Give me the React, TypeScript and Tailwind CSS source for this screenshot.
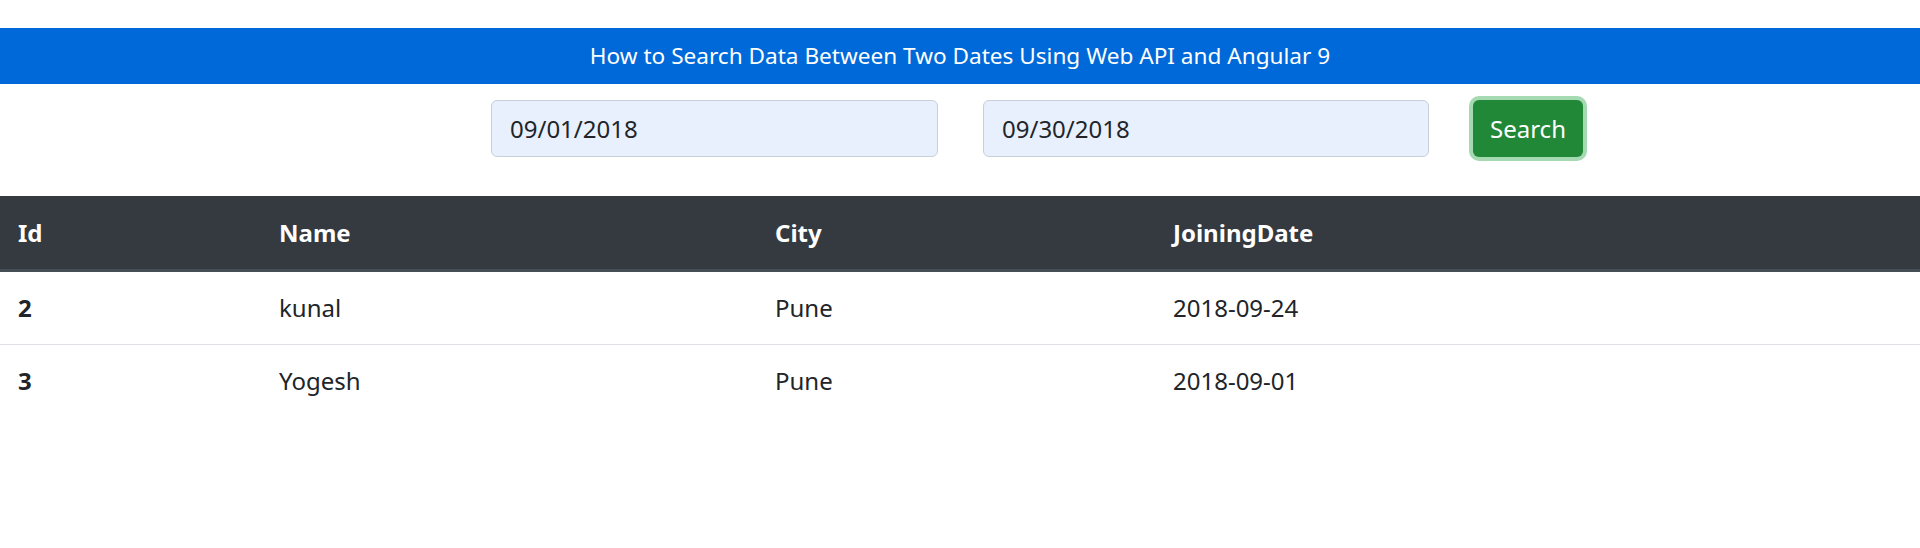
const rows = [
  { id: 2, name: 'kunal', city: 'Pune', joiningDate: '2018-09-24' },
  { id: 3, name: 'Yogesh', city: 'Pune', joiningDate: '2018-09-01' },
];

export default function App() {
  return (
    <div className="min-h-[548px] bg-white font-['Noto_Sans',sans-serif] text-[24px] leading-[36px] text-[#212529]">
      <div className="pt-[28px]">
        <div className="flex h-[56px] items-center justify-center bg-[#0069d9] text-[22.6px] text-white">
          How to Search Data Between Two Dates Using Web API and Angular 9
        </div>
      </div>

      {/* search form */}
      <div className="flex items-center pt-[16px] pl-[491px]">
        <input
          readOnly
          value="09/01/2018"
          className="h-[57px] w-[447px] rounded-[6px] border-[1.5px] border-[#c9cfd6] bg-[#e8f0fe] px-[18px] text-[24px] text-[#212529] outline-none"
        />
        <input
          readOnly
          value="09/30/2018"
          className="ml-[45px] h-[57px] w-[446px] rounded-[6px] border-[1.5px] border-[#c9cfd6] bg-[#e8f0fe] px-[18px] text-[24px] text-[#212529] outline-none"
        />
        <button className="ml-[44px] h-[57px] w-[110px] rounded-[6px] bg-[#218838] text-[24px] text-white ring-4 ring-[#a4d9b1]">
          Search
        </button>
      </div>

      <table className="mt-[39px] w-full border-collapse text-left">
        <colgroup>
          <col className="w-[261px]" />
          <col className="w-[496px]" />
          <col className="w-[398px]" />
          <col />
        </colgroup>
        <thead>
          <tr className="bg-[#343a40] text-white">
            <th className="border-b-[3px] border-[#454d55] px-[18px] pt-[19px] pb-[18px] font-bold">Id</th>
            <th className="border-b-[3px] border-[#454d55] px-[18px] pt-[19px] pb-[18px] font-bold">Name</th>
            <th className="border-b-[3px] border-[#454d55] px-[18px] pt-[19px] pb-[18px] font-bold">City</th>
            <th className="border-b-[3px] border-[#454d55] px-[18px] pt-[19px] pb-[18px] font-bold">JoiningDate</th>
          </tr>
        </thead>
        <tbody>
          {rows.map((row, i) => (
            <tr key={row.id} className={i > 0 ? 'border-t-[1.5px] border-[#dee2e6]' : ''}>
              <th className="px-[18px] py-[18px] font-bold">{row.id}</th>
              <td className="px-[18px] py-[18px]">{row.name}</td>
              <td className="px-[18px] py-[18px]">{row.city}</td>
              <td className="px-[18px] py-[18px]">{row.joiningDate}</td>
            </tr>
          ))}
        </tbody>
      </table>
    </div>
  );
}
